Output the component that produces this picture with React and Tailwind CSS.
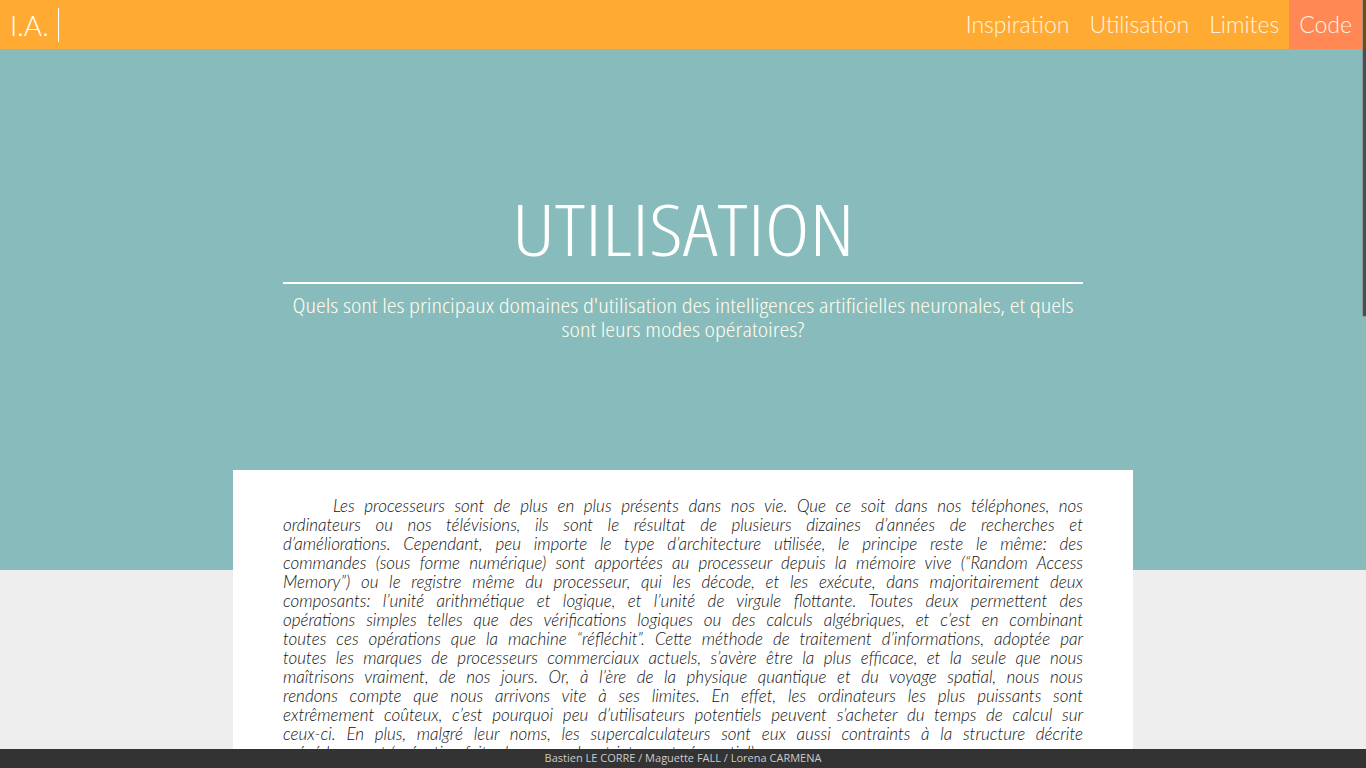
const navItems = ['Inspiration', 'Utilisation', 'Limites', 'Code'];

const lines = [
  'Les processeurs sont de plus en plus présents dans nos vie. Que ce soit dans nos téléphones, nos',
  'ordinateurs ou nos télévisions, ils sont le résultat de plusieurs dizaines d’années de recherches et',
  'd’améliorations. Cependant, peu importe le type d’architecture utilisée, le principe reste le même: des',
  'commandes (sous forme numérique) sont apportées au processeur depuis la mémoire vive (“Random Access',
  'Memory”) ou le registre même du processeur, qui les décode, et les exécute, dans majoritairement deux',
  'composants: l’unité arithmétique et logique, et l’unité de virgule flottante. Toutes deux permettent des',
  'opérations simples telles que des vérifications logiques ou des calculs algébriques, et c’est en combinant',
  'toutes ces opérations que la machine “réfléchit”. Cette méthode de traitement d’informations, adoptée par',
  'toutes les marques de processeurs commerciaux actuels, s’avère être la plus efficace, et la seule que nous',
  'maîtrisons vraiment, de nos jours. Or, à l’ère de la physique quantique et du voyage spatial, nous nous',
  'rendons compte que nous arrivons vite à ses limites. En effet, les ordinateurs les plus puissants sont',
  'extrêmement coûteux, c’est pourquoi peu d’utilisateurs potentiels peuvent s’acheter du temps de calcul sur',
  'ceux-ci. En plus, malgré leur noms, les supercalculateurs sont eux aussi contraints à la structure décrite',
];

export default function App() {
  return (
    <div className="relative h-screen overflow-hidden bg-[#eeeeee] font-['Lato','Liberation_Sans',sans-serif]">
      {/* Top bar */}
      <header className="flex h-[49px] items-stretch justify-between bg-[#ffaa33] pr-[4px]">
        <div className="flex items-center pl-[10px]">
          <span className="text-[28px] font-light leading-none text-white">I.A.</span>
          <span className="ml-[9px] h-[34px] w-px bg-white" />
        </div>
        <nav className="flex items-stretch">
          {navItems.map((item) => (
            <a
              key={item}
              className={`flex items-center px-[10px] pb-[1px] text-[23px] font-light text-[#fff4e2] ${
                item === 'Code' ? 'bg-[#ff8855]' : ''
              }`}
            >
              {item}
            </a>
          ))}
        </nav>
      </header>

      {/* Hero */}
      <section className="flex h-[521px] flex-col items-center bg-[#88bbbb] pt-[143px] font-['Open_Sans',sans-serif] text-white">
        <h1 className="scale-x-[1.185] text-[72px] font-light leading-none [font-stretch:75%]">UTILISATION</h1>
        <div className="mt-[18px] h-[2px] w-[800px] bg-white" />
        <p className="mt-[9px] w-[800px] scale-x-[1.18] text-center text-[21px] font-light leading-[24px] text-[#fffcee] [font-stretch:75%]">
          Quels sont les principaux domaines d'utilisation des intelligences artificielles neuronales, et quels
          <br />
          sont leurs modes opératoires?
        </p>
      </section>

      {/* Article card */}
      <main className="mx-auto -mt-[100px] w-[900px] bg-white px-[50px] pt-[26px] pb-10">
        <div className="text-[17px] font-light italic leading-[19px] text-[#111]">
          {lines.map((line, i) => (
            <div
              key={i}
              className={`whitespace-nowrap text-justify [text-align-last:justify] ${i === 0 ? 'pl-[50px]' : ''}`}
            >
              {line}
            </div>
          ))}
          <div>précédemment (exécution faite dans un ordre strictement séquentiel).</div>
        </div>
      </main>

      {/* Footer */}
      <footer className="absolute inset-x-0 bottom-0 flex h-[19px] items-center justify-center bg-[#333333] font-['Open_Sans',sans-serif] text-[11px] text-[#cccccc]">
        Bastien LE CORRE / Maguette FALL / Lorena CARMENA
      </footer>

      {/* Overlay scrollbar */}
      <div className="absolute right-0 top-0 h-[317px] w-[4px] rounded-bl-[2px] border-b border-l border-white/40 bg-black/55" />
    </div>
  );
}
